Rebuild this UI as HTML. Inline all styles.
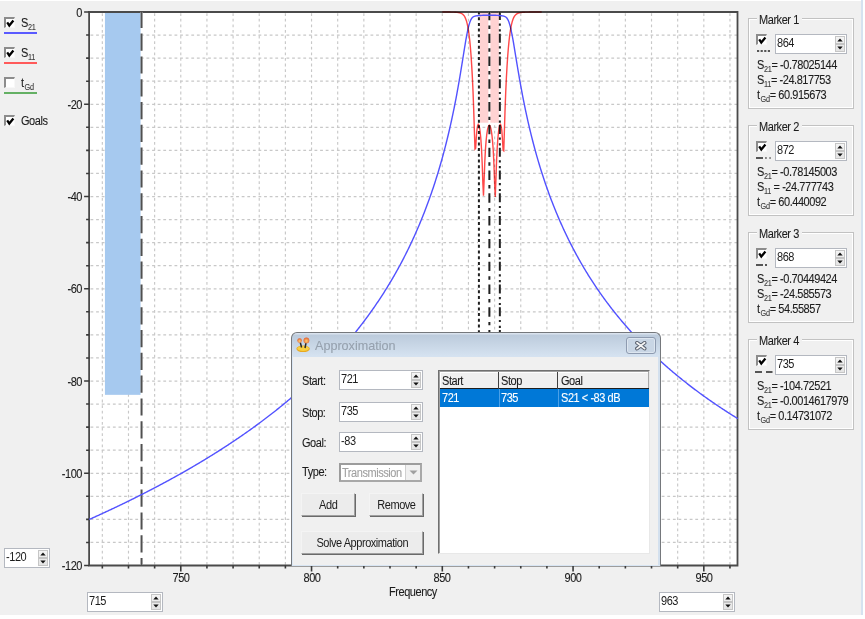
<!DOCTYPE html><html><head><meta charset="utf-8"><style>
*{margin:0;padding:0;box-sizing:border-box}
html,body{width:865px;height:619px;overflow:hidden;background:#fff}
body{position:relative;font-family:"Liberation Sans",sans-serif;font-size:11px;color:#1a1a1a}
.a{position:absolute}
.t{position:absolute;white-space:nowrap;line-height:11px;font-size:12.3px;letter-spacing:-0.5px;transform:scaleX(.894);transform-origin:0 0;color:#1c1c1c;-webkit-text-stroke-width:0.1px}
.win{position:absolute;left:0;top:1px;width:861px;height:614px;background:#f0f0f0}
.edge{position:absolute;left:861px;top:0;width:2px;height:615px;background:#d6e2f0}
.cb{position:absolute;width:11px;height:11px;background:#fff;border-top:2px solid #8c8c8c;border-left:2px solid #8c8c8c;border-right:1px solid #f8f8f8;border-bottom:1px solid #f8f8f8}
.cb svg{position:absolute;left:0;top:0}
.sub{font-size:8.2px;letter-spacing:-0.3px;position:relative;top:3px;color:#3a3a3a}
.sp{position:absolute;background:#fff;border:1px solid #b4b8c0}
.sp .v{position:absolute;left:1px;top:4px;line-height:11px;font-size:12.3px;letter-spacing:-0.5px;transform:scaleX(.894);transform-origin:0 0;white-space:nowrap;color:#1c1c1c}
.sp .bt{position:absolute;right:1px;top:1px;bottom:1px;width:10px;background:linear-gradient(#f4f4f4,#e4e4e4);border:1px solid #c6c6c6}
.gb{position:absolute;border:1px solid #c2c2c2;box-shadow:inset 0 0 0 1px #fff}
.gbt{position:absolute;background:#f0f0f0;padding:0 2px;line-height:11px;white-space:nowrap}.gbt span{display:inline-block;font-size:12.3px;letter-spacing:-0.5px;transform:scaleX(.894);transform-origin:0 0;color:#1c1c1c;-webkit-text-stroke-width:0.1px}
.btn{position:absolute;background:#ececec;border:1px solid #a0a0a0;border-top-color:#f4f4f4;border-left-color:#f4f4f4;box-shadow:1px 1px 0 #6a6a6a;text-align:center;line-height:11px;white-space:nowrap}.btn span{display:inline-block;font-size:12.3px;letter-spacing:-0.5px;transform:scaleX(.894);color:#1c1c1c}
</style></head><body><div class="win"></div><div class="edge"></div>
<svg class="a" style="left:0;top:0" width="865" height="619" viewBox="0 0 865 619"><rect x="88" y="12" width="649.5" height="553.5" fill="#fff"/>
<path d="M102.33 12V565.5 M128.48 12V565.5 M154.63 12V565.5 M180.78 12V565.5 M206.93 12V565.5 M233.09 12V565.5 M259.24 12V565.5 M285.39 12V565.5 M311.54 12V565.5 M337.69 12V565.5 M363.85 12V565.5 M390.00 12V565.5 M416.15 12V565.5 M442.30 12V565.5 M468.45 12V565.5 M494.61 12V565.5 M520.76 12V565.5 M546.91 12V565.5 M573.06 12V565.5 M599.21 12V565.5 M625.37 12V565.5 M651.52 12V565.5 M677.67 12V565.5 M703.82 12V565.5 M729.97 12V565.5" stroke="#c8c8c8" stroke-width="1.15" stroke-dasharray="2.8 2.8" stroke-dashoffset="4.4" fill="none"/>
<path d="M89 35.06H737.5 M89 58.12H737.5 M89 81.19H737.5 M89 104.25H737.5 M89 127.31H737.5 M89 150.38H737.5 M89 173.44H737.5 M89 196.50H737.5 M89 219.56H737.5 M89 242.62H737.5 M89 265.69H737.5 M89 288.75H737.5 M89 311.81H737.5 M89 334.88H737.5 M89 357.94H737.5 M89 381.00H737.5 M89 404.06H737.5 M89 427.12H737.5 M89 450.19H737.5 M89 473.25H737.5 M89 496.31H737.5 M89 519.38H737.5 M89 542.44H737.5" stroke="#c8c8c8" stroke-width="1.25" stroke-dasharray="2.8 2.8" stroke-dashoffset="4.1" fill="none"/>
<rect x="104.94" y="12" width="36.61" height="382.84" fill="#a6c9ef"/>
<rect x="478.91" y="12" width="20.92" height="110.70" fill="#ffd2d2"/>
<path d="M89.1 12H737.5V565.5H89.1Z" stroke="#4a4a4a" stroke-width="1.8" fill="none"/>
<path d="M84.1 12.00H89.1 M86.1 35.06H89.1 M86.1 58.12H89.1 M86.1 81.19H89.1 M84.1 104.25H89.1 M86.1 127.31H89.1 M86.1 150.38H89.1 M86.1 173.44H89.1 M84.1 196.50H89.1 M86.1 219.56H89.1 M86.1 242.62H89.1 M86.1 265.69H89.1 M84.1 288.75H89.1 M86.1 311.81H89.1 M86.1 334.88H89.1 M86.1 357.94H89.1 M84.1 381.00H89.1 M86.1 404.06H89.1 M86.1 427.12H89.1 M86.1 450.19H89.1 M84.1 473.25H89.1 M86.1 496.31H89.1 M86.1 519.38H89.1 M86.1 542.44H89.1 M84.1 565.50H89.1 M102.33 565.5V568.5 M128.48 565.5V568.5 M154.63 565.5V568.5 M180.78 565.5V571.5 M206.93 565.5V568.5 M233.09 565.5V568.5 M259.24 565.5V568.5 M285.39 565.5V568.5 M311.54 565.5V571.5 M337.69 565.5V568.5 M363.85 565.5V568.5 M390.00 565.5V568.5 M416.15 565.5V568.5 M442.30 565.5V571.5 M468.45 565.5V568.5 M494.61 565.5V568.5 M520.76 565.5V568.5 M546.91 565.5V568.5 M573.06 565.5V571.5 M599.21 565.5V568.5 M625.37 565.5V568.5 M651.52 565.5V568.5 M677.67 565.5V568.5 M703.82 565.5V571.5 M729.97 565.5V568.5" stroke="#3a3a3a" stroke-width="1.6" fill="none"/>
<path d="M141.55 12V565M478.91 12V565M489.38 12V565M499.84 12V565" stroke="#fff" stroke-width="2"/>
<path d="M141.55 12V565" stroke="#505050" stroke-width="2" stroke-dasharray="17.2 5.6" stroke-dashoffset="1.2"/>
<path d="M478.91 12V565" stroke="#202020" stroke-width="2" stroke-dasharray="3 2.69" stroke-dashoffset="0.48"/>
<path d="M489.38 12V565" stroke="#202020" stroke-width="2" stroke-dasharray="9.4 5.2 3.4 4.8" stroke-dashoffset="1.1"/>
<path d="M499.84 12V565" stroke="#202020" stroke-width="2" stroke-dasharray="9 3.6 2.2 3.6 2.2 2.2" stroke-dashoffset="1.1"/>
<polyline points="89.25,519.46 89.90,519.17 90.56,518.87 91.21,518.58 91.87,518.29 92.52,517.99 93.17,517.70 93.83,517.40 94.48,517.10 95.13,516.81 95.79,516.51 96.44,516.21 97.10,515.92 97.75,515.62 98.40,515.32 99.06,515.02 99.71,514.72 100.36,514.42 101.02,514.12 101.67,513.82 102.33,513.52 102.98,513.22 103.63,512.92 104.29,512.61 104.94,512.31 105.59,512.01 106.25,511.70 106.90,511.40 107.56,511.09 108.21,510.79 108.86,510.48 109.52,510.18 110.17,509.87 110.83,509.56 111.48,509.26 112.13,508.95 112.79,508.64 113.44,508.33 114.09,508.02 114.75,507.71 115.40,507.40 116.06,507.09 116.71,506.78 117.36,506.47 118.02,506.16 118.67,505.84 119.32,505.53 119.98,505.22 120.63,504.90 121.29,504.59 121.94,504.27 122.59,503.96 123.25,503.64 123.90,503.32 124.56,503.01 125.21,502.69 125.86,502.37 126.52,502.05 127.17,501.73 127.82,501.41 128.48,501.09 129.13,500.77 129.79,500.45 130.44,500.13 131.09,499.81 131.75,499.49 132.40,499.16 133.05,498.84 133.71,498.51 134.36,498.19 135.02,497.86 135.67,497.54 136.32,497.21 136.98,496.89 137.63,496.56 138.28,496.23 138.94,495.90 139.59,495.57 140.25,495.24 140.90,494.91 141.55,494.58 142.21,494.25 142.86,493.92 143.52,493.59 144.17,493.25 144.82,492.92 145.48,492.59 146.13,492.25 146.78,491.92 147.44,491.58 148.09,491.24 148.75,490.91 149.40,490.57 150.05,490.23 150.71,489.89 151.36,489.55 152.01,489.21 152.67,488.87 153.32,488.53 153.98,488.19 154.63,487.85 155.28,487.50 155.94,487.16 156.59,486.82 157.25,486.47 157.90,486.13 158.55,485.78 159.21,485.43 159.86,485.09 160.51,484.74 161.17,484.39 161.82,484.04 162.48,483.69 163.13,483.34 163.78,482.99 164.44,482.64 165.09,482.29 165.74,481.93 166.40,481.58 167.05,481.23 167.71,480.87 168.36,480.52 169.01,480.16 169.67,479.80 170.32,479.45 170.98,479.09 171.63,478.73 172.28,478.37 172.94,478.01 173.59,477.65 174.24,477.29 174.90,476.93 175.55,476.56 176.21,476.20 176.86,475.84 177.51,475.47 178.17,475.11 178.82,474.74 179.47,474.37 180.13,474.01 180.78,473.64 181.44,473.27 182.09,472.90 182.74,472.53 183.40,472.16 184.05,471.79 184.70,471.41 185.36,471.04 186.01,470.67 186.67,470.29 187.32,469.92 187.97,469.54 188.63,469.16 189.28,468.79 189.94,468.41 190.59,468.03 191.24,467.65 191.90,467.27 192.55,466.89 193.20,466.50 193.86,466.12 194.51,465.74 195.17,465.35 195.82,464.97 196.47,464.58 197.13,464.19 197.78,463.81 198.43,463.42 199.09,463.03 199.74,462.64 200.40,462.25 201.05,461.86 201.70,461.46 202.36,461.07 203.01,460.68 203.67,460.28 204.32,459.88 204.97,459.49 205.63,459.09 206.28,458.69 206.93,458.29 207.59,457.89 208.24,457.49 208.90,457.09 209.55,456.69 210.20,456.28 210.86,455.88 211.51,455.47 212.16,455.07 212.82,454.66 213.47,454.25 214.13,453.84 214.78,453.44 215.43,453.02 216.09,452.61 216.74,452.20 217.39,451.79 218.05,451.37 218.70,450.96 219.36,450.54 220.01,450.13 220.66,449.71 221.32,449.29 221.97,448.87 222.63,448.45 223.28,448.03 223.93,447.60 224.59,447.18 225.24,446.76 225.89,446.33 226.55,445.90 227.20,445.48 227.86,445.05 228.51,444.62 229.16,444.19 229.82,443.76 230.47,443.32 231.12,442.89 231.78,442.46 232.43,442.02 233.09,441.58 233.74,441.15 234.39,440.71 235.05,440.27 235.70,439.83 236.36,439.38 237.01,438.94 237.66,438.50 238.32,438.05 238.97,437.61 239.62,437.16 240.28,436.71 240.93,436.26 241.59,435.81 242.24,435.36 242.89,434.91 243.55,434.45 244.20,434.00 244.85,433.54 245.51,433.08 246.16,432.63 246.82,432.17 247.47,431.71 248.12,431.24 248.78,430.78 249.43,430.32 250.08,429.85 250.74,429.39 251.39,428.92 252.05,428.45 252.70,427.98 253.35,427.51 254.01,427.03 254.66,426.56 255.32,426.09 255.97,425.61 256.62,425.13 257.28,424.65 257.93,424.17 258.58,423.69 259.24,423.21 259.89,422.72 260.55,422.24 261.20,421.75 261.85,421.26 262.51,420.78 263.16,420.28 263.81,419.79 264.47,419.30 265.12,418.81 265.78,418.31 266.43,417.81 267.08,417.31 267.74,416.81 268.39,416.31 269.05,415.81 269.70,415.31 270.35,414.80 271.01,414.29 271.66,413.78 272.31,413.27 272.97,412.76 273.62,412.25 274.28,411.74 274.93,411.22 275.58,410.70 276.24,410.18 276.89,409.66 277.54,409.14 278.20,408.62 278.85,408.09 279.51,407.57 280.16,407.04 280.81,406.51 281.47,405.98 282.12,405.45 282.77,404.91 283.43,404.38 284.08,403.84 284.74,403.30 285.39,402.76 286.04,402.22 286.70,401.67 287.35,401.13 288.01,400.58 288.66,400.03 289.31,399.48 289.97,398.93 290.62,398.37 291.27,397.82 291.93,397.26 292.58,396.70 293.24,396.14 293.89,395.57 294.54,395.01 295.20,394.44 295.85,393.87 296.50,393.30 297.16,392.73 297.81,392.16 298.47,391.58 299.12,391.00 299.77,390.42 300.43,389.84 301.08,389.26 301.74,388.67 302.39,388.09 303.04,387.50 303.70,386.90 304.35,386.31 305.00,385.72 305.66,385.12 306.31,384.52 306.97,383.92 307.62,383.31 308.27,382.71 308.93,382.10 309.58,381.49 310.23,380.88 310.89,380.27 311.54,379.65 312.20,379.03 312.85,378.41 313.50,377.79 314.16,377.16 314.81,376.53 315.46,375.90 316.12,375.27 316.77,374.64 317.43,374.00 318.08,373.36 318.73,372.72 319.39,372.08 320.04,371.43 320.70,370.78 321.35,370.13 322.00,369.48 322.66,368.83 323.31,368.17 323.96,367.51 324.62,366.84 325.27,366.18 325.93,365.51 326.58,364.84 327.23,364.17 327.89,363.49 328.54,362.81 329.19,362.13 329.85,361.44 330.50,360.76 331.16,360.07 331.81,359.38 332.46,358.68 333.12,357.98 333.77,357.28 334.43,356.58 335.08,355.87 335.73,355.16 336.39,354.45 337.04,353.74 337.69,353.02 338.35,352.30 339.00,351.57 339.66,350.84 340.31,350.11 340.96,349.38 341.62,348.64 342.27,347.90 342.92,347.16 343.58,346.41 344.23,345.66 344.89,344.91 345.54,344.16 346.19,343.40 346.85,342.63 347.50,341.87 348.15,341.10 348.81,340.32 349.46,339.55 350.12,338.77 350.77,337.98 351.42,337.20 352.08,336.40 352.73,335.61 353.39,334.81 354.04,334.01 354.69,333.20 355.35,332.39 356.00,331.58 356.65,330.76 357.31,329.94 357.96,329.11 358.62,328.28 359.27,327.45 359.92,326.61 360.58,325.77 361.23,324.92 361.88,324.07 362.54,323.22 363.19,322.36 363.85,321.50 364.50,320.63 365.15,319.76 365.81,318.88 366.46,318.00 367.12,317.11 367.77,316.22 368.42,315.32 369.08,314.42 369.73,313.52 370.38,312.61 371.04,311.69 371.69,310.77 372.35,309.85 373.00,308.92 373.65,307.98 374.31,307.04 374.96,306.10 375.61,305.15 376.27,304.19 376.92,303.23 377.58,302.26 378.23,301.29 378.88,300.31 379.54,299.32 380.19,298.33 380.84,297.33 381.50,296.33 382.15,295.32 382.81,294.31 383.46,293.29 384.11,292.26 384.77,291.23 385.42,290.19 386.08,289.14 386.73,288.09 387.38,287.03 388.04,285.96 388.69,284.89 389.34,283.81 390.00,282.72 390.65,281.63 391.31,280.53 391.96,279.42 392.61,278.30 393.27,277.18 393.92,276.04 394.57,274.90 395.23,273.76 395.88,272.60 396.54,271.44 397.19,270.27 397.84,269.09 398.50,267.90 399.15,266.70 399.81,265.49 400.46,264.28 401.11,263.05 401.77,261.82 402.42,260.58 403.07,259.33 403.73,258.06 404.38,256.79 405.04,255.51 405.69,254.22 406.34,252.92 407.00,251.61 407.65,250.28 408.30,248.95 408.96,247.61 409.61,246.25 410.27,244.88 410.92,243.51 411.57,242.12 412.23,240.71 412.88,239.30 413.53,237.87 414.19,236.43 414.84,234.98 415.50,233.52 416.15,232.04 416.80,230.55 417.46,229.04 418.11,227.52 418.77,225.99 419.42,224.44 420.07,222.88 420.73,221.30 421.38,219.70 422.03,218.09 422.69,216.47 423.34,214.82 424.00,213.16 424.65,211.48 425.30,209.79 425.96,208.08 426.61,206.34 427.26,204.59 427.92,202.82 428.57,201.03 429.23,199.22 429.88,197.39 430.53,195.54 431.19,193.67 431.84,191.77 432.50,189.85 433.15,187.91 433.80,185.95 434.46,183.96 435.11,181.94 435.76,179.90 436.42,177.83 437.07,175.74 437.73,173.61 438.38,171.46 439.03,169.28 439.69,167.06 440.34,164.82 440.99,162.54 441.65,160.23 442.30,157.89 442.96,155.51 443.61,153.09 444.26,150.63 444.92,148.14 445.57,145.61 446.22,143.03 446.88,140.41 447.53,137.75 448.19,135.04 448.84,132.28 449.49,129.47 450.15,126.61 450.80,123.70 451.46,120.73 452.11,117.71 452.76,114.63 453.42,111.48 454.07,108.28 454.72,105.01 455.38,101.67 456.03,98.26 456.69,94.78 457.34,91.23 457.99,87.61 458.65,83.91 459.30,80.14 459.95,76.30 460.61,72.39 461.26,68.42 461.92,64.40 462.57,60.33 463.22,56.24 463.88,52.16 464.53,48.10 465.19,44.11 465.84,40.24 466.49,36.55 467.15,33.08 467.80,29.90 468.45,27.05 469.11,24.57 469.76,22.48 470.42,20.76 471.07,19.40 471.72,18.36 472.38,17.58 473.03,17.02 473.68,16.61 474.34,16.33 474.99,16.14 475.65,15.99 476.30,15.89 476.95,15.80 477.61,15.73 478.26,15.67 478.91,15.61 479.57,15.55 480.22,15.49 480.88,15.44 481.53,15.40 482.18,15.36 482.84,15.32 483.49,15.30 484.15,15.27 484.80,15.26 485.45,15.25 486.11,15.24 486.76,15.24 487.41,15.24 488.07,15.24 488.72,15.24 489.38,15.24 490.03,15.24 490.68,15.23 491.34,15.23 491.99,15.23 492.64,15.23 493.30,15.24 493.95,15.25 494.61,15.26 495.26,15.28 495.91,15.31 496.57,15.34 497.22,15.38 497.88,15.42 498.53,15.47 499.18,15.52 499.84,15.58 500.49,15.64 501.14,15.70 501.80,15.77 502.45,15.85 503.11,15.95 503.76,16.09 504.41,16.29 505.07,16.56 505.72,16.95 506.37,17.50 507.03,18.26 507.68,19.27 508.34,20.59 508.99,22.25 509.64,24.28 510.30,26.68 510.95,29.43 511.60,32.52 512.26,35.88 512.91,39.47 513.57,43.24 514.22,47.12 514.87,51.09 515.53,55.08 516.18,59.08 516.84,63.06 517.49,67.01 518.14,70.91 518.80,74.74 519.45,78.51 520.10,82.22 520.76,85.85 521.41,89.41 522.07,92.90 522.72,96.31 523.37,99.66 524.03,102.94 524.68,106.16 525.33,109.31 525.99,112.40 526.64,115.42 527.30,118.39 527.95,121.31 528.60,124.16 529.26,126.97 529.91,129.72 530.57,132.43 531.22,135.09 531.87,137.70 532.53,140.27 533.18,142.79 533.83,145.28 534.49,147.72 535.14,150.12 535.80,152.49 536.45,154.82 537.10,157.12 537.76,159.38 538.41,161.60 539.06,163.80 539.72,165.96 540.37,168.09 541.03,170.20 541.68,172.27 542.33,174.32 542.99,176.34 543.64,178.33 544.29,180.30 544.95,182.24 545.60,184.15 546.26,186.05 546.91,187.92 547.56,189.76 548.22,191.59 548.87,193.39 549.53,195.17 550.18,196.94 550.83,198.68 551.49,200.40 552.14,202.10 552.79,203.78 553.45,205.45 554.10,207.10 554.76,208.72 555.41,210.34 556.06,211.93 556.72,213.51 557.37,215.07 558.02,216.62 558.68,218.15 559.33,219.67 559.99,221.17 560.64,222.65 561.29,224.13 561.95,225.58 562.60,227.03 563.26,228.46 563.91,229.88 564.56,231.28 565.22,232.67 565.87,234.05 566.52,235.42 567.18,236.77 567.83,238.11 568.49,239.44 569.14,240.76 569.79,242.07 570.45,243.37 571.10,244.65 571.75,245.93 572.41,247.19 573.06,248.45 573.72,249.69 574.37,250.93 575.02,252.15 575.68,253.36 576.33,254.57 576.98,255.76 577.64,256.95 578.29,258.13 578.95,259.29 579.60,260.45 580.25,261.60 580.91,262.74 581.56,263.88 582.22,265.00 582.87,266.12 583.52,267.23 584.18,268.33 584.83,269.42 585.48,270.51 586.14,271.58 586.79,272.65 587.45,273.71 588.10,274.77 588.75,275.82 589.41,276.86 590.06,277.89 590.71,278.92 591.37,279.93 592.02,280.95 592.68,281.95 593.33,282.95 593.98,283.95 594.64,284.93 595.29,285.91 595.95,286.89 596.60,287.85 597.25,288.81 597.91,289.77 598.56,290.72 599.21,291.66 599.87,292.60 600.52,293.53 601.18,294.46 601.83,295.38 602.48,296.30 603.14,297.20 603.79,298.11 604.44,299.01 605.10,299.90 605.75,300.79 606.41,301.67 607.06,302.55 607.71,303.42 608.37,304.29 609.02,305.16 609.67,306.01 610.33,306.87 610.98,307.72 611.64,308.56 612.29,309.40 612.94,310.23 613.60,311.06 614.25,311.89 614.91,312.71 615.56,313.53 616.21,314.34 616.87,315.15 617.52,315.95 618.17,316.75 618.83,317.55 619.48,318.34 620.14,319.12 620.79,319.91 621.44,320.69 622.10,321.46 622.75,322.23 623.40,323.00 624.06,323.76 624.71,324.52 625.37,325.28 626.02,326.03 626.67,326.78 627.33,327.52 627.98,328.26 628.63,329.00 629.29,329.73 629.94,330.46 630.60,331.19 631.25,331.91 631.90,332.63 632.56,333.35 633.21,334.06 633.87,334.77 634.52,335.47 635.17,336.18 635.83,336.88 636.48,337.57 637.13,338.27 637.79,338.96 638.44,339.64 639.10,340.33 639.75,341.01 640.40,341.68 641.06,342.36 641.71,343.03 642.36,343.70 643.02,344.36 643.67,345.03 644.33,345.69 644.98,346.34 645.63,347.00 646.29,347.65 646.94,348.29 647.60,348.94 648.25,349.58 648.90,350.22 649.56,350.86 650.21,351.49 650.86,352.13 651.52,352.76 652.17,353.38 652.83,354.01 653.48,354.63 654.13,355.25 654.79,355.86 655.44,356.48 656.09,357.09 656.75,357.70 657.40,358.30 658.06,358.91 658.71,359.51 659.36,360.11 660.02,360.70 660.67,361.30 661.33,361.89 661.98,362.48 662.63,363.07 663.29,363.65 663.94,364.23 664.59,364.82 665.25,365.39 665.90,365.97 666.56,366.54 667.21,367.11 667.86,367.68 668.52,368.25 669.17,368.82 669.82,369.38 670.48,369.94 671.13,370.50 671.79,371.06 672.44,371.61 673.09,372.16 673.75,372.71 674.40,373.26 675.05,373.81 675.71,374.35 676.36,374.89 677.02,375.44 677.67,375.97 678.32,376.51 678.98,377.04 679.63,377.58 680.29,378.11 680.94,378.64 681.59,379.16 682.25,379.69 682.90,380.21 683.55,380.73 684.21,381.25 684.86,381.77 685.52,382.29 686.17,382.80 686.82,383.32 687.48,383.83 688.13,384.34 688.78,384.84 689.44,385.35 690.09,385.85 690.75,386.35 691.40,386.85 692.05,387.35 692.71,387.85 693.36,388.35 694.02,388.84 694.67,389.33 695.32,389.82 695.98,390.31 696.63,390.80 697.28,391.28 697.94,391.77 698.59,392.25 699.25,392.73 699.90,393.21 700.55,393.69 701.21,394.17 701.86,394.64 702.51,395.11 703.17,395.58 703.82,396.06 704.48,396.52 705.13,396.99 705.78,397.46 706.44,397.92 707.09,398.38 707.74,398.85 708.40,399.31 709.05,399.76 709.71,400.22 710.36,400.68 711.01,401.13 711.67,401.58 712.32,402.04 712.98,402.49 713.63,402.93 714.28,403.38 714.94,403.83 715.59,404.27 716.24,404.72 716.90,405.16 717.55,405.60 718.21,406.04 718.86,406.48 719.51,406.91 720.17,407.35 720.82,407.78 721.47,408.22 722.13,408.65 722.78,409.08 723.44,409.51 724.09,409.94 724.74,410.36 725.40,410.79 726.05,411.21 726.71,411.64 727.36,412.06 728.01,412.48 728.67,412.90 729.32,413.32 729.97,413.73 730.63,414.15 731.28,414.56 731.94,414.98 732.59,415.39 733.24,415.80 733.90,416.21 734.55,416.62 735.20,417.03 735.86,417.43 736.51,417.84 737.17,418.24 737.82,418.65" fill="none" stroke="#5252ff" stroke-width="1.4"/>
<polyline points="442.30,12.01 442.96,12.02 443.61,12.02 444.26,12.02 444.92,12.02 445.57,12.03 446.22,12.03 446.88,12.03 447.53,12.04 448.19,12.04 448.84,12.05 449.49,12.06 450.15,12.07 450.80,12.08 451.46,12.09 452.11,12.11 452.76,12.13 453.42,12.15 454.07,12.17 454.72,12.21 455.38,12.24 456.03,12.29 456.69,12.35 457.34,12.42 457.99,12.50 458.65,12.61 459.30,12.75 459.95,12.91 460.61,13.13 461.26,13.39 461.92,13.73 462.57,14.17 463.22,14.73 463.88,15.46 464.53,16.40 465.19,17.61 465.84,19.16 466.49,21.14 467.15,23.62 467.80,26.68 468.45,30.42 469.11,34.98 469.76,40.59 470.42,47.49 471.07,55.84 471.72,65.83 472.38,77.66 473.03,91.76 473.68,108.86 474.34,129.61 474.99,148.99 475.65,148.14 476.30,137.48 476.95,129.85 477.61,125.73 478.26,124.31 478.91,125.07 479.57,127.79 480.22,132.49 480.88,139.43 481.53,149.25 482.18,163.17 482.84,182.61 483.49,195.77 484.15,179.23 484.80,161.64 485.45,149.35 486.11,140.70 486.76,134.53 487.41,130.20 488.07,127.34 488.72,125.73 489.38,125.28 490.03,125.95 490.68,127.79 491.34,130.91 491.99,135.54 492.64,142.11 493.30,151.31 493.95,164.46 494.61,183.22 495.26,196.90 495.91,179.70 496.57,160.92 497.22,147.73 497.88,138.41 498.53,131.84 499.18,127.44 499.84,124.99 500.49,124.49 501.14,126.19 501.80,130.67 502.45,138.87 503.11,150.43 503.76,150.90 504.41,130.25 505.07,109.25 505.72,92.22 506.37,78.23 507.03,66.50 507.68,56.59 508.34,48.26 508.99,41.34 509.64,35.66 510.30,31.01 510.95,27.19 511.60,24.06 512.26,21.52 512.91,19.50 513.57,17.89 514.22,16.64 514.87,15.67 515.53,14.91 516.18,14.32 516.84,13.86 517.49,13.50 518.14,13.21 518.80,12.99 519.45,12.81 520.10,12.67 520.76,12.55 521.41,12.46 522.07,12.38 522.72,12.32 523.37,12.27 524.03,12.23 524.68,12.19 525.33,12.16 525.99,12.14 526.64,12.12 527.30,12.10 527.95,12.09 528.60,12.08 529.26,12.07 529.91,12.06 530.57,12.05 531.22,12.04 531.87,12.04 532.53,12.03 533.18,12.03 533.83,12.03 534.49,12.02 535.14,12.02 535.80,12.02 536.45,12.02 537.10,12.01 537.76,12.01 538.41,12.01 539.06,12.01 539.72,12.01 540.37,12.01 541.03,12.01 541.68,12.01" fill="none" stroke="#ff4848" stroke-width="1.4" style="mix-blend-mode:multiply"/></svg>
<div class="cb" style="left:4px;top:17px"><svg width="11" height="11" viewBox="0 0 11 11"><path d="M1.2 3.4 L3.3 6.6 L7.4 1.6" stroke="#000" stroke-width="2.3" fill="none"/></svg></div>
<div class="t" style="left:20.5px;top:17.5px;">S<span class="sub">21</span></div>
<div class="a" style="left:4px;top:32px;width:33px;height:2px;background:#5a5aff"></div>
<div class="cb" style="left:4px;top:47px"><svg width="11" height="11" viewBox="0 0 11 11"><path d="M1.2 3.4 L3.3 6.6 L7.4 1.6" stroke="#000" stroke-width="2.3" fill="none"/></svg></div>
<div class="t" style="left:20.5px;top:47.5px;">S<span class="sub">11</span></div>
<div class="a" style="left:4px;top:62px;width:33px;height:2px;background:#ff5a5a"></div>
<div class="cb" style="left:4px;top:77px"></div>
<div class="t" style="left:20.5px;top:77.5px;">t<span class="sub" style="margin-left:1px">Gd</span></div>
<div class="a" style="left:4px;top:92px;width:33px;height:2px;background:#64b064"></div>
<div class="cb" style="left:4px;top:115px"><svg width="11" height="11" viewBox="0 0 11 11"><path d="M1.2 3.4 L3.3 6.6 L7.4 1.6" stroke="#000" stroke-width="2.3" fill="none"/></svg></div>
<div class="t" style="left:20.5px;top:116px;">Goals</div>
<div class="t" style="left:40px;width:42px;text-align:right;transform-origin:100% 0;top:7.5px">0</div>
<div class="t" style="left:40px;width:42px;text-align:right;transform-origin:100% 0;top:99.8px">-20</div>
<div class="t" style="left:40px;width:42px;text-align:right;transform-origin:100% 0;top:192.0px">-40</div>
<div class="t" style="left:40px;width:42px;text-align:right;transform-origin:100% 0;top:284.2px">-60</div>
<div class="t" style="left:40px;width:42px;text-align:right;transform-origin:100% 0;top:376.5px">-80</div>
<div class="t" style="left:40px;width:42px;text-align:right;transform-origin:100% 0;top:468.8px">-100</div>
<div class="t" style="left:40px;width:42px;text-align:right;transform-origin:100% 0;top:561.0px">-120</div>
<div class="t" style="left:160.8px;width:40px;text-align:center;transform-origin:50% 0;top:573px">750</div>
<div class="t" style="left:291.5px;width:40px;text-align:center;transform-origin:50% 0;top:573px">800</div>
<div class="t" style="left:422.3px;width:40px;text-align:center;transform-origin:50% 0;top:573px">850</div>
<div class="t" style="left:553.1px;width:40px;text-align:center;transform-origin:50% 0;top:573px">900</div>
<div class="t" style="left:683.8px;width:40px;text-align:center;transform-origin:50% 0;top:573px">950</div>
<div class="t" style="left:389px;top:587px;">Frequency</div>
<div class="sp" style="left:4px;top:548px;width:46px;height:20px"><div class="v" style="top:3px">-120</div><div class="bt"><svg class="a" style="left:-1px;top:-1px" width="10" height="16" viewBox="0 0 10 16"><rect x="0" y="7.0" width="10" height="2" fill="#c4c4c4"/><path d="M2.3 5.4 L5 2.6 L7.7 5.4Z" fill="#111"/><path d="M2.3 10.6 L5 13.4 L7.7 10.6Z" fill="#111"/></svg></div></div>
<div class="sp" style="left:87px;top:592px;width:76px;height:20px"><div class="v" style="top:3px">715</div><div class="bt"><svg class="a" style="left:-1px;top:-1px" width="10" height="16" viewBox="0 0 10 16"><rect x="0" y="7.0" width="10" height="2" fill="#c4c4c4"/><path d="M2.3 5.4 L5 2.6 L7.7 5.4Z" fill="#111"/><path d="M2.3 10.6 L5 13.4 L7.7 10.6Z" fill="#111"/></svg></div></div>
<div class="sp" style="left:659px;top:592px;width:76px;height:20px"><div class="v" style="top:3px">963</div><div class="bt"><svg class="a" style="left:-1px;top:-1px" width="10" height="16" viewBox="0 0 10 16"><rect x="0" y="7.0" width="10" height="2" fill="#c4c4c4"/><path d="M2.3 5.4 L5 2.6 L7.7 5.4Z" fill="#111"/><path d="M2.3 10.6 L5 13.4 L7.7 10.6Z" fill="#111"/></svg></div></div>
<div class="gb" style="left:748px;top:18.0px;width:106px;height:91px"></div>
<div class="gbt" style="left:757px;top:15.0px;width:45px;height:11px"><span>Marker 1</span></div>
<div class="cb" style="left:756px;top:34.0px"><svg width="11" height="11" viewBox="0 0 11 11"><path d="M1.2 3.4 L3.3 6.6 L7.4 1.6" stroke="#000" stroke-width="2.3" fill="none"/></svg></div>
<svg class="a" style="left:755px;top:49.6px" width="19" height="2"><path d="M2 1H4.2M5.6 1H7.8M9.2 1H11.4M12.8 1H15" stroke="#222" stroke-width="1.6"/></svg>
<div class="sp" style="left:775px;top:34.0px;width:72px;height:20px"><div class="v" style="top:3px">864</div><div class="bt"><svg class="a" style="left:-1px;top:-1px" width="10" height="16" viewBox="0 0 10 16"><rect x="0" y="7.0" width="10" height="2" fill="#c4c4c4"/><path d="M2.3 5.4 L5 2.6 L7.7 5.4Z" fill="#111"/><path d="M2.3 10.6 L5 13.4 L7.7 10.6Z" fill="#111"/></svg></div></div>
<div class="t" style="left:757px;top:60.0px;">S<span class="sub">21</span>= -0.78025144</div>
<div class="t" style="left:757px;top:75.0px;">S<span class="sub">11</span>= -24.817753</div>
<div class="t" style="left:757px;top:90.0px;">t<span class="sub" style="margin-left:1px">Gd</span>= 60.915673</div>
<div class="gb" style="left:748px;top:125.1px;width:106px;height:91px"></div>
<div class="gbt" style="left:757px;top:122.1px;width:45px;height:11px"><span>Marker 2</span></div>
<div class="cb" style="left:756px;top:141.1px"><svg width="11" height="11" viewBox="0 0 11 11"><path d="M1.2 3.4 L3.3 6.6 L7.4 1.6" stroke="#000" stroke-width="2.3" fill="none"/></svg></div>
<svg class="a" style="left:755px;top:156.7px" width="19" height="2"><path d="M1 1H8M10.3 1H11.6M14.5 1H15.6" stroke="#222" stroke-width="1.6"/></svg>
<div class="sp" style="left:775px;top:141.1px;width:72px;height:20px"><div class="v" style="top:3px">872</div><div class="bt"><svg class="a" style="left:-1px;top:-1px" width="10" height="16" viewBox="0 0 10 16"><rect x="0" y="7.0" width="10" height="2" fill="#c4c4c4"/><path d="M2.3 5.4 L5 2.6 L7.7 5.4Z" fill="#111"/><path d="M2.3 10.6 L5 13.4 L7.7 10.6Z" fill="#111"/></svg></div></div>
<div class="t" style="left:757px;top:167.1px;">S<span class="sub">21</span>= -0.78145003</div>
<div class="t" style="left:757px;top:182.1px;">S<span class="sub">11</span>&nbsp;= -24.777743</div>
<div class="t" style="left:757px;top:197.1px;">t<span class="sub" style="margin-left:1px">Gd</span>= 60.440092</div>
<div class="gb" style="left:748px;top:232.2px;width:106px;height:91px"></div>
<div class="gbt" style="left:757px;top:229.2px;width:45px;height:11px"><span>Marker 3</span></div>
<div class="cb" style="left:756px;top:248.2px"><svg width="11" height="11" viewBox="0 0 11 11"><path d="M1.2 3.4 L3.3 6.6 L7.4 1.6" stroke="#000" stroke-width="2.3" fill="none"/></svg></div>
<svg class="a" style="left:755px;top:263.8px" width="19" height="2"><path d="M1 1H8M10 1H12" stroke="#222" stroke-width="1.6"/></svg>
<div class="sp" style="left:775px;top:248.2px;width:72px;height:20px"><div class="v" style="top:3px">868</div><div class="bt"><svg class="a" style="left:-1px;top:-1px" width="10" height="16" viewBox="0 0 10 16"><rect x="0" y="7.0" width="10" height="2" fill="#c4c4c4"/><path d="M2.3 5.4 L5 2.6 L7.7 5.4Z" fill="#111"/><path d="M2.3 10.6 L5 13.4 L7.7 10.6Z" fill="#111"/></svg></div></div>
<div class="t" style="left:757px;top:274.2px;">S<span class="sub">21</span>= -0.70449424</div>
<div class="t" style="left:757px;top:289.2px;">S<span class="sub">21</span>= -24.585573</div>
<div class="t" style="left:757px;top:304.2px;">t<span class="sub" style="margin-left:1px">Gd</span>= 54.55857</div>
<div class="gb" style="left:748px;top:339.3px;width:106px;height:91px"></div>
<div class="gbt" style="left:757px;top:336.3px;width:45px;height:11px"><span>Marker 4</span></div>
<div class="cb" style="left:756px;top:355.29999999999995px"><svg width="11" height="11" viewBox="0 0 11 11"><path d="M1.2 3.4 L3.3 6.6 L7.4 1.6" stroke="#000" stroke-width="2.3" fill="none"/></svg></div>
<svg class="a" style="left:755px;top:370.9px" width="19" height="2"><path d="M0 1H7M11 1H17.5" stroke="#222" stroke-width="1.6"/></svg>
<div class="sp" style="left:775px;top:355.29999999999995px;width:72px;height:20px"><div class="v" style="top:3px">735</div><div class="bt"><svg class="a" style="left:-1px;top:-1px" width="10" height="16" viewBox="0 0 10 16"><rect x="0" y="7.0" width="10" height="2" fill="#c4c4c4"/><path d="M2.3 5.4 L5 2.6 L7.7 5.4Z" fill="#111"/><path d="M2.3 10.6 L5 13.4 L7.7 10.6Z" fill="#111"/></svg></div></div>
<div class="t" style="left:757px;top:381.29999999999995px;">S<span class="sub">21</span>= -104.72521</div>
<div class="t" style="left:757px;top:396.29999999999995px;">S<span class="sub">21</span>= -0.0014617979</div>
<div class="t" style="left:757px;top:411.29999999999995px;">t<span class="sub" style="margin-left:1px">Gd</span>= 0.14731072</div>
<div class="a" style="left:291px;top:332px;width:370px;height:234px;border:1px solid #75787c;border-bottom:none;border-radius:6px 6px 0 0;background:linear-gradient(#dae3ee 0,#dae3ee 1px,#bccbdc 2px,#d5e2f0 23px,#d8e5f3)"></div>
<div class="a" style="left:293px;top:357px;width:365px;height:208px;background:#f0f0f0"></div>
<div class="a" style="left:292px;top:356px;width:1px;height:209px;background:#dbe7f4"></div><div class="a" style="left:658px;top:356px;width:2px;height:209px;background:#d3e0ee"></div>
<svg class="a" style="left:296px;top:337px" width="16" height="16" viewBox="0 0 16 16"><defs><radialGradient id="kb" cx="0.5" cy="0.6" r="0.6"><stop offset="0" stop-color="#ffd070"/><stop offset="1" stop-color="#e05a30"/></radialGradient></defs><ellipse cx="7.1" cy="11.8" rx="6.7" ry="3.3" fill="#e8a820"/><ellipse cx="7.1" cy="11.5" rx="5.8" ry="2.6" fill="#f8d040"/><path d="M4.3 5.5 L5.6 10.5 M10 6 L9 11" stroke="#2a2a2a" stroke-width="1.5"/><circle cx="3.6" cy="3.6" r="2.3" fill="url(#kb)"/><circle cx="10.4" cy="3.4" r="2.9" fill="url(#kb)"/></svg>
<div class="t" style="left:315px;top:340px;font-size:12.6px;line-height:13px;letter-spacing:0;transform:none;color:#96a1ae">Approximation</div>
<div class="a" style="left:626px;top:337px;width:30px;height:17px;border:1px solid #8e9bb0;border-radius:3px;background:#c9d6e5;box-shadow:inset 0 0 0 1px #dde6f0"><svg class="a" style="left:8px;top:2.5px" width="12" height="10"><path d="M2 1.8L9.6 7.6M9.6 1.8L2 7.6" stroke="#5a6270" stroke-width="3.8" stroke-linecap="round"/><path d="M2 1.8L9.6 7.6M9.6 1.8L2 7.6" stroke="#f6f6f6" stroke-width="1.8" stroke-linecap="round"/></svg></div>
<div class="t" style="left:302px;top:376px;">Start:</div>
<div class="t" style="left:302px;top:408px;">Stop:</div>
<div class="t" style="left:302px;top:438px;">Goal:</div>
<div class="sp" style="left:339px;top:370px;width:84px;height:20px"><div class="v" style="top:3px">721</div><div class="bt"><svg class="a" style="left:-1px;top:-1px" width="10" height="16" viewBox="0 0 10 16"><rect x="0" y="7.0" width="10" height="2" fill="#c4c4c4"/><path d="M2.3 5.4 L5 2.6 L7.7 5.4Z" fill="#111"/><path d="M2.3 10.6 L5 13.4 L7.7 10.6Z" fill="#111"/></svg></div></div>
<div class="sp" style="left:339px;top:402px;width:84px;height:20px"><div class="v" style="top:3px">735</div><div class="bt"><svg class="a" style="left:-1px;top:-1px" width="10" height="16" viewBox="0 0 10 16"><rect x="0" y="7.0" width="10" height="2" fill="#c4c4c4"/><path d="M2.3 5.4 L5 2.6 L7.7 5.4Z" fill="#111"/><path d="M2.3 10.6 L5 13.4 L7.7 10.6Z" fill="#111"/></svg></div></div>
<div class="sp" style="left:339px;top:432px;width:84px;height:20px"><div class="v" style="top:3px">-83</div><div class="bt"><svg class="a" style="left:-1px;top:-1px" width="10" height="16" viewBox="0 0 10 16"><rect x="0" y="7.0" width="10" height="2" fill="#c4c4c4"/><path d="M2.3 5.4 L5 2.6 L7.7 5.4Z" fill="#111"/><path d="M2.3 10.6 L5 13.4 L7.7 10.6Z" fill="#111"/></svg></div></div>
<div class="t" style="left:302px;top:467px;">Type:</div>
<div class="a" style="left:339px;top:463px;width:83px;height:19px;border:2px solid #9c9c9c;border-right-color:#a8a8a8;border-bottom-color:#a8a8a8;background:#fff"><div class="t" style="left:1px;top:3px;color:#a0a0a0">Transmission</div><div class="a" style="right:0;top:0;width:15px;height:15px;background:#f0f0f0;border-left:1px solid #d0d0d0"><svg class="a" style="left:3px;top:5px" width="9" height="5"><path d="M0.5 0.5H8.5L4.5 4.5Z" fill="#a0a0a0"/></svg></div></div>
<div class="btn" style="left:301px;top:493px;width:54px;height:23px;padding-top:6px"><span>Add</span></div>
<div class="btn" style="left:369px;top:493px;width:54px;height:23px;padding-top:6px"><span>Remove</span></div>
<div class="btn" style="left:301px;top:531px;width:122px;height:23px;padding-top:6px"><span>Solve Approximation</span></div>
<div class="a" style="left:438px;top:370px;width:212px;height:184px;background:#fff;border:1px solid #707070;border-right-color:#e8e8e8;border-bottom-color:#e8e8e8;box-shadow:inset 1px 1px 0 #a0a0a0"></div>
<div class="a" style="left:440px;top:372px;width:209px;height:17px;background:#f0f0f0;border-bottom:1px solid #1e1e1e;box-shadow:inset 1px 1px 0 #fff"></div>
<div class="a" style="left:498px;top:372px;width:1px;height:17px;background:#404040"></div>
<div class="a" style="left:557px;top:372px;width:1px;height:17px;background:#404040"></div>
<div class="a" style="left:648px;top:372px;width:1px;height:16px;background:#a8a8a8"></div>
<div class="t" style="left:442px;top:376px;">Start</div><div class="t" style="left:501px;top:376px;">Stop</div><div class="t" style="left:561px;top:376px;">Goal</div>
<div class="a" style="left:440px;top:389px;width:209px;height:18px;background:#0078d7"></div>
<div class="a" style="left:499px;top:389px;width:1px;height:18px;background:#4aa0e8"></div><div class="a" style="left:558px;top:389px;width:1px;height:18px;background:#4aa0e8"></div>
<div class="t" style="left:442px;top:393px;color:#fff">721</div><div class="t" style="left:501px;top:393px;color:#fff">735</div><div class="t" style="left:561px;top:393px;color:#fff">S21 &lt; -83 dB</div></body></html>
